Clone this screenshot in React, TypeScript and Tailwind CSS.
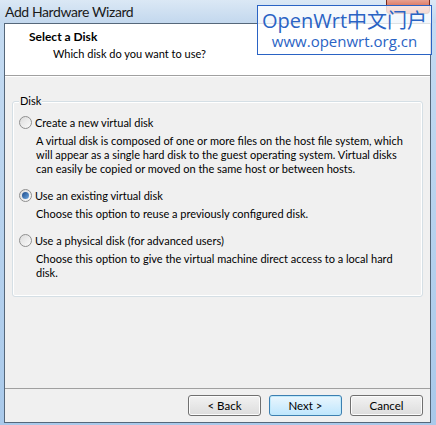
import React from 'react';

type Option = {
  label: string;
  lines: string[];
  checked?: boolean;
};

const OPTIONS: Option[] = [
  {
    label: 'Create a new virtual disk',
    lines: [
      'A virtual disk is composed of one or more files on the host file system, which',
      'will appear as a single hard disk to the guest operating system. Virtual disks',
      'can easily be copied or moved on the same host or between hosts.',
    ],
  },
  {
    label: 'Use an existing virtual disk',
    lines: ['Choose this option to reuse a previously configured disk.'],
    checked: true,
  },
  {
    label: 'Use a physical disk (for advanced users)',
    lines: ['Choose this option to give the virtual machine direct access to a local hard', 'disk.'],
  },
];

function Radio({ checked }: { checked?: boolean }) {
  return (
    <span className="w-[13px] h-[13px] rounded-full border border-[#8f8f8f] bg-gradient-to-br from-[#dcdcdc] to-[#fbfbfb] flex items-center justify-center shrink-0">
      {checked && (
        <span className="w-[7px] h-[7px] rounded-full bg-gradient-to-br from-[#1c4a8a] to-[#6fa8e0]" />
      )}
    </span>
  );
}

function WinButton({ label, focused }: { label: string; focused?: boolean }) {
  return (
    <button
      className={`w-[73px] h-[21px] rounded-[3px] border text-[11.5px] text-black ${
        focused
          ? 'border-[#3c7fb1] bg-gradient-to-b from-[#eaf6fd] to-[#bee6fd] shadow-[inset_0_0_0_1px_#bfe9fb]'
          : 'border-[#707070] bg-gradient-to-b from-[#f2f2f2] to-[#dddddd] shadow-[inset_0_0_0_1px_#fcfcfc]'
      }`}
    >
      {label}
    </button>
  );
}

export default function App() {
  return (
    <div className="relative w-[436px] h-[425px] overflow-hidden bg-gradient-to-b from-[#c6dcf2] to-[#a9c9ea] font-['Lato',sans-serif] text-black">
      {/* title bar */}
      <div className="h-[23px] flex items-center pl-[5px] bg-gradient-to-b from-[#dbe8f5] to-[#c3d8ee]">
        <span className="text-[14px] tracking-[-0.4px] leading-none text-[#1a1a1a]">Add Hardware Wizard</span>
      </div>

      {/* close button, mostly covered */}
      <div className="absolute top-0 left-[386px] w-[44px] h-[14px] rounded-b-[4px] bg-gradient-to-b from-[#e8a090] to-[#c9452c] border border-[#7a2a1c] border-t-0" />

      {/* client area */}
      <div className="ml-[4px] mr-[5px] h-[400px] border border-[#55677a] flex flex-col bg-[#f0f0f0]">
        <div className="h-[52px] bg-white border-b border-[#a0a0a0] pl-[24px] pt-[5px]">
          <div className="text-[12px] font-bold leading-[16px]">Select a Disk</div>
          <div className="text-[11px] leading-[16px] pl-[24px] mt-[1px]">Which disk do you want to use?</div>
        </div>

        <div className="flex-1 border-t border-white px-[7px] pt-[24px]">
          <div className="relative h-[196px] border border-[#d5dfe5] rounded-[3px] shadow-[inset_0_0_0_1px_#ffffff]">
            <span className="absolute -top-[9px] left-[6px] px-[1px] bg-[#f0f0f0] text-[11px] leading-[15px]">Disk</span>
            <div className="pt-[13px] pl-[6px] flex flex-col gap-[12px]">
              {OPTIONS.map((o) => (
                <div key={o.label} className="flex flex-col">
                  <div className="flex items-center gap-[3px] h-[15px]">
                    <Radio checked={o.checked} />
                    <span className="text-[11px] leading-[15px]">{o.label}</span>
                  </div>
                  <div className="pl-[17px] mt-[4px] text-[11px] leading-[14px]">
                    {o.lines.map((l) => (
                      <div key={l} className="whitespace-nowrap">{l}</div>
                    ))}
                  </div>
                </div>
              ))}
            </div>
          </div>
        </div>

        <div className="h-[34px] border-t border-[#a0a0a0] flex items-center justify-end gap-[8px] pr-[7px]">
          <WinButton label="< Back" />
          <WinButton label="Next >" focused />
          <WinButton label="Cancel" />
        </div>
      </div>

      {/* watermark */}
      <div className="absolute top-[5px] left-[257px] w-[175px] h-[50px] border border-[#2a63c4] bg-white/80 flex flex-col items-center justify-center font-['Open_Sans','Noto_Sans_CJK_SC',sans-serif] text-[#2a63c4] whitespace-nowrap">
        <span className="text-[20px] leading-[22px]">OpenWrt中文门户</span>
        <span className="text-[15px] leading-[19px]">www.openwrt.org.cn</span>
      </div>
    </div>
  );
}
